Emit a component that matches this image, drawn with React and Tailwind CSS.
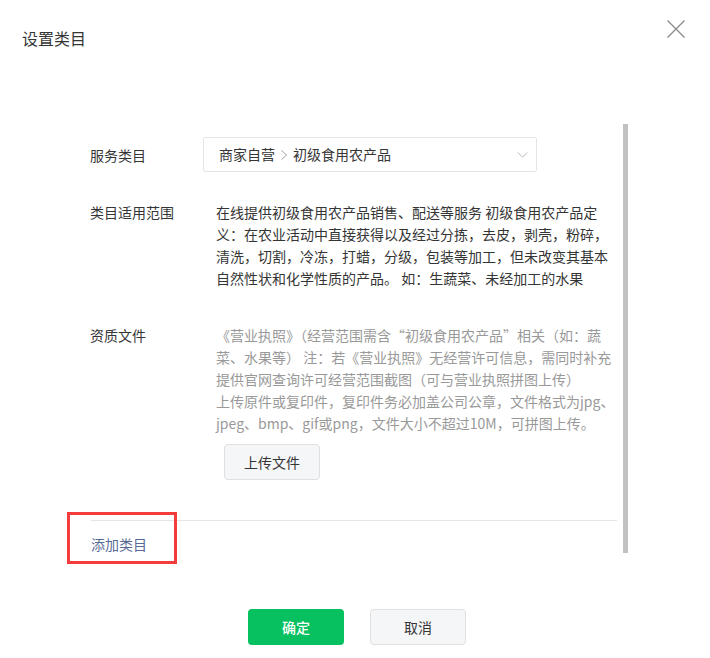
import React from 'react';

const font = { fontFamily: '"Noto Sans CJK SC", "Noto Sans", sans-serif' };

function Chevron({ className }) {
  return (
    <svg viewBox="0 0 12 7" className={className} fill="none" stroke="currentColor" strokeWidth="1.1">
      <path d="M0.5 0.5 L6 6 L11.5 0.5" />
    </svg>
  );
}

export default function App() {
  return (
    <div
      className="relative w-[710px] h-[658px] bg-white text-[#353535] overflow-hidden"
      style={font}
    >
      {/* HEADER */}
      <div className="flex items-start justify-between h-[124px]">
        <h2 className="ml-[22px] mt-[27px] text-[16px] leading-[22px] font-normal">设置类目</h2>
        <button className="mt-[20px] mr-[25px] w-[18px] h-[18px] text-[#8a8a8a]">
          <svg viewBox="0 0 18 18" className="w-[18px] h-[18px]" stroke="currentColor" strokeWidth="1.3" fill="none">
            <path d="M0.5 0.5 L17.5 17.5 M17.5 0.5 L0.5 17.5" />
          </svg>
        </button>
      </div>

      {/* SCROLL AREA */}
      <div className="flex h-[429px] items-start">
        <div className="w-[527px] ml-[90px] text-[14px]">
          {/* service category */}
          <div className="flex items-center mt-[13px]">
            <div className="w-[113px] leading-[22px]">服务类目</div>
            <div className="w-[334px] h-[35px] border border-[#e5e5e5] rounded-[2px] flex items-center pl-[15px] pr-[8px]">
              <span>商家自营</span>
              <svg viewBox="0 0 6 10" className="w-[6px] h-[10px] mx-[6px] text-[#a0a0a0]" fill="none" stroke="currentColor" strokeWidth="1">
                <path d="M0.5 0.5 L5.5 5 L0.5 9.5" />
              </svg>
              <span>初级食用农产品</span>
              <Chevron className="ml-auto w-[11px] h-[6px] text-[#b2b2b2]" />
            </div>
          </div>

          {/* scope */}
          <div className="flex mt-[29px] leading-[22px]">
            <div className="w-[126px] shrink-0">类目适用范围</div>
            <div className="w-[396px]">
              <p>在线提供初级食用农产品销售、配送等服务 初级食用农产品定</p>
              <p>义：在农业活动中直接获得以及经过分拣，去皮，剥壳，粉碎，</p>
              <p>清洗，切割，冷冻，打蜡，分级，包装等加工，但未改变其基本</p>
              <p>自然性状和化学性质的产品。 如：生蔬菜、未经加工的水果</p>
            </div>
          </div>

          {/* qualification */}
          <div className="flex mt-[35px] leading-[22px]">
            <div className="w-[126px] shrink-0">资质文件</div>
            <div className="w-[396px]">
              <div className="text-[#999999] whitespace-nowrap">
                <p>《营业执照》（经营范围需含“初级食用农产品”相关（如：蔬</p>
                <p>菜、水果等） 注：若《营业执照》无经营许可信息，需同时补充</p>
                <p>提供官网查询许可经营范围截图（可与营业执照拼图上传）</p>
                <p>上传原件或复印件，复印件务必加盖公司公章，文件格式为jpg、</p>
                <p>jpeg、bmp、gif或png，文件大小不超过10M，可拼图上传。</p>
              </div>
              <button className="mt-[10px] ml-[8px] w-[96px] h-[36px] rounded-[4px] border border-[#e0e0e0] bg-[#f5f6f7] text-[14px] text-[#353535]">
                上传文件
              </button>
            </div>
          </div>

          <div className="mt-[40px] ml-[1px] border-t border-[#e5e5e5]" />
          <div className="mt-[12px] ml-[1px] leading-[22px] text-[#576b95]">添加类目</div>
        </div>
        <div className="ml-[6px] w-[5px] h-[429px] bg-[#c1c1c1]" />
      </div>

      {/* FOOTER */}
      <div className="flex justify-center gap-[26px] mt-[56px] pl-[4px] text-[14px]">
        <button className="w-[96px] h-[36px] rounded-[4px] bg-[#07c160] text-white font-medium">确定</button>
        <button className="w-[96px] h-[36px] rounded-[4px] border border-[#e0e0e0] bg-[#f5f6f7] text-[#353535]">取消</button>
      </div>

      {/* annotation */}
      <div className="absolute left-[67px] top-[512px] w-[110px] h-[52px] border-[3px] border-[#f53c3c]" />
    </div>
  );
}
